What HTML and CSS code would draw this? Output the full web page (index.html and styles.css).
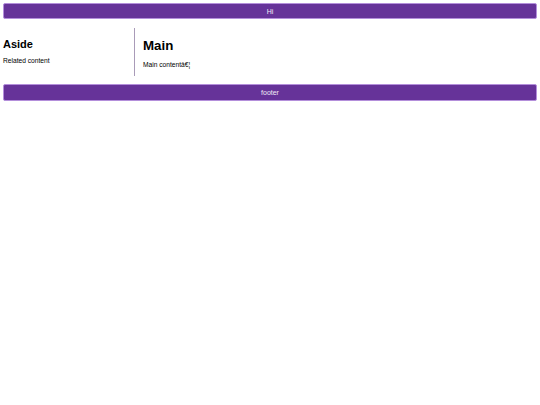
FILE: index.html
```html
<!DOCTYPE html>
<html>
<head>
<meta charset="utf-8">
<link rel="stylesheet" href="styles.css">
</head>
<body>
<div class="page">
  <header class="bar">Hi</header>
  <div class="content">
    <aside class="aside">
      <h2 class="aside-title">Aside</h2>
      <p class="text">Related content</p>
    </aside>
    <main class="main">
      <h1 class="main-title">Main</h1>
      <p class="text">Main contentâ€¦</p>
    </main>
  </div>
  <footer class="bar bar-foot">footer</footer>
</div>
</body>
</html>
```
FILE: styles.css
```css
html, body {
  margin: 0;
  padding: 0;
  background: #fff;
}
body {
  font-family: "Liberation Sans", Arial, sans-serif;
  color: #000;
}
.page {
  padding: 3px;
  display: flex;
  flex-direction: column;
}
.bar {
  box-sizing: border-box;
  height: 16px;
  background: #663399;
  border: 1px solid #b48fdb;
  border-radius: 2px;
  color: #f0eaf6;
  font-size: 7px;
  display: flex;
  align-items: center;
  justify-content: center;
}
.bar-foot {
  height: 17px;
}
.content {
  display: flex;
  margin: 9px 0 8px;
}
.aside {
  width: 131px;
  flex: none;
}
.main {
  flex: 1;
  border-left: 1px solid #a99bb8;
  padding-left: 8px;
}
.aside-title {
  font-size: 11px;
  font-weight: bold;
  margin: 10px 0 7px;
}
.main-title {
  font-size: 13.3px;
  font-weight: bold;
  margin: 10px 0 8px;
}
.text {
  font-size: 6.67px;
  margin: 0 0 8px;
}
```
